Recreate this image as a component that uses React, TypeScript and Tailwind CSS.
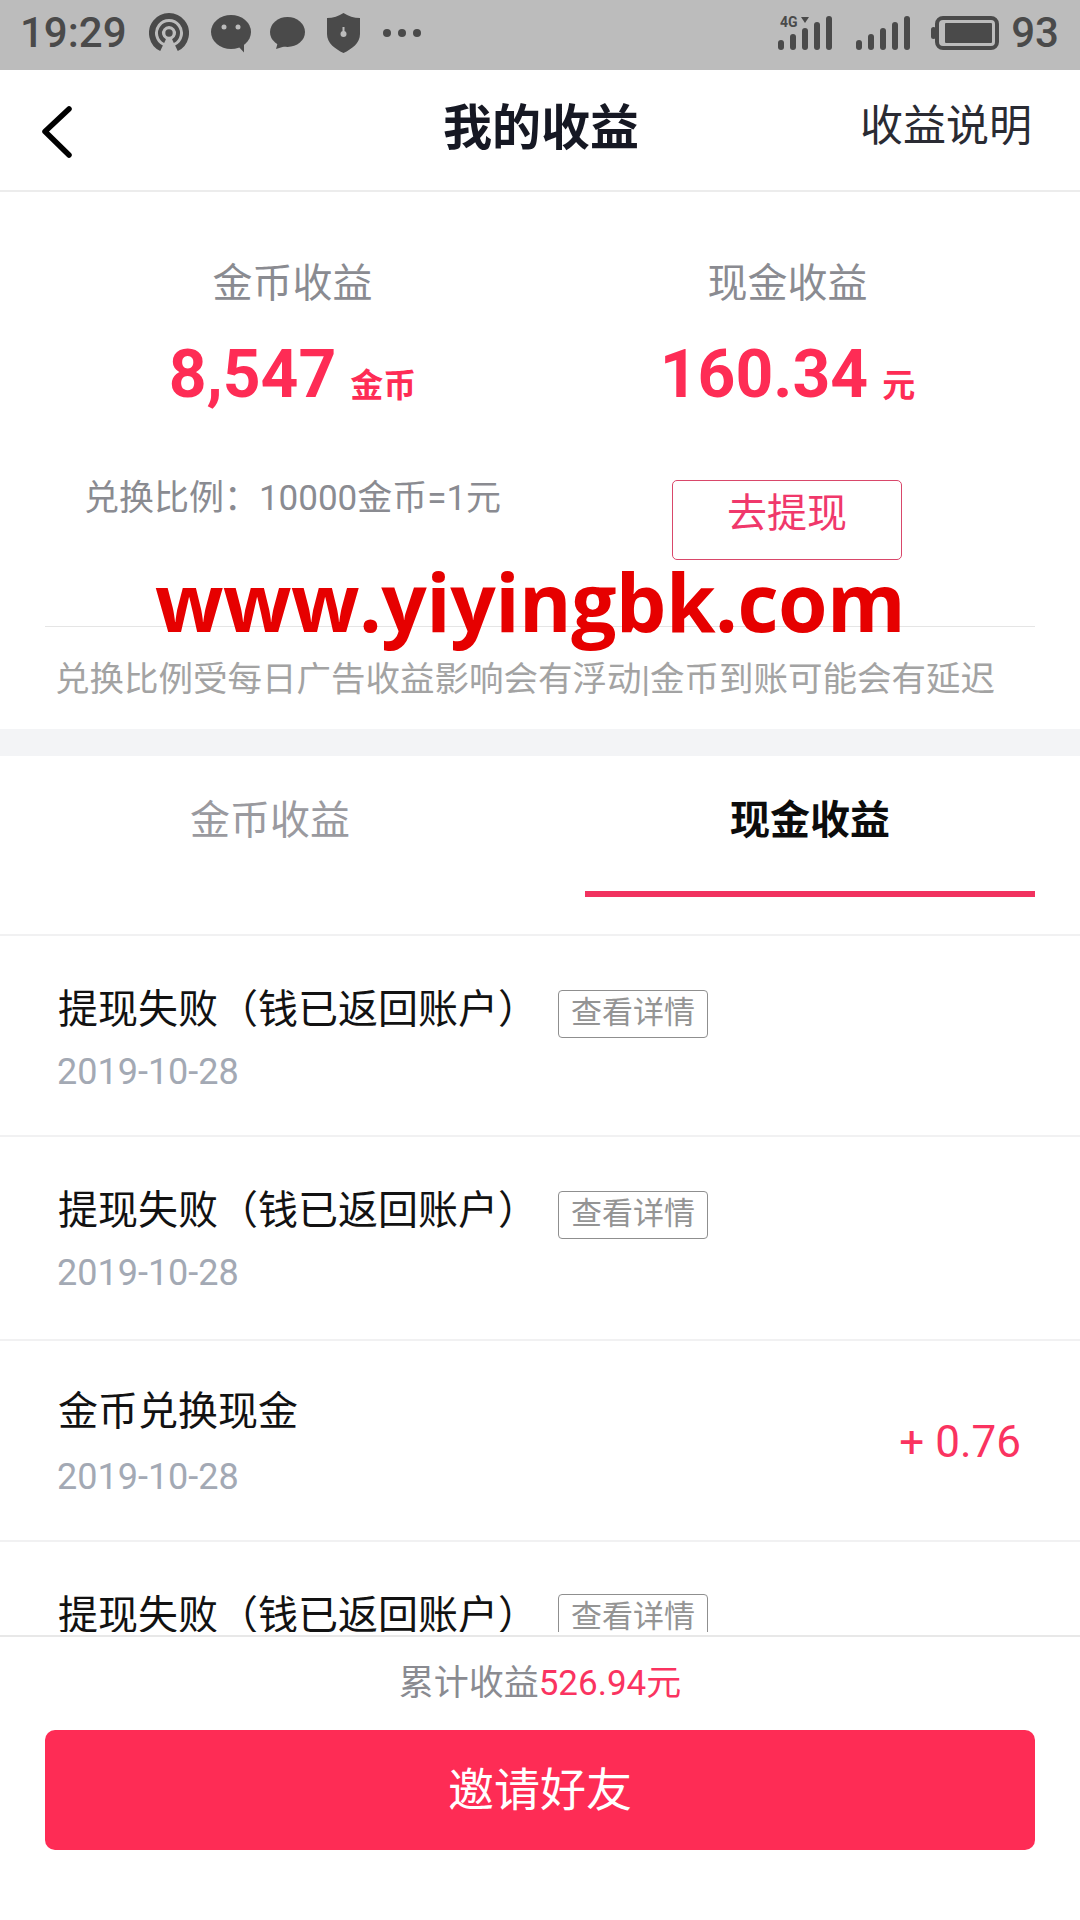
import React from "react";

const font = { fontFamily: 'Roboto, "Noto Sans CJK SC", sans-serif' };

const Signal: React.FC<{ has4g?: boolean }> = ({ has4g }) => (
  <svg width="54" height="36" viewBox="0 0 54 36">
    {[10, 16, 22, 28, 34].map((h, i) => (
      <rect key={h} x={i * 12} y={35 - h} width="6" height={h} rx="3" fill="#4a4a4a" />
    ))}
    {has4g && (
      <>
        <text x="2" y="12" fontSize="14" fontWeight="700" fontFamily="Roboto" fill="#4a4a4a">
          4G
        </text>
        <path d="M23 2h8l-4 6z" fill="#4a4a4a" />
      </>
    )}
  </svg>
);

const Record: React.FC<{ title: string; tall?: boolean; last?: boolean; amount?: string }> = ({ title, tall, last, amount }) => (
  <div className={`${tall ? "h-[204px]" : "h-[201px]"} shrink-0 border-b-2 border-[#f1f1f2] pl-[58px] pr-[59px] flex justify-between`}>
    <div className="flex flex-col">
      <div className={`flex items-center h-[50px] ${amount ? "mt-[46px]" : "mt-[49px]"}`}>
        <span className="text-[40px] leading-[50px] text-[#121212]">{title}</span>
        {!amount && (
          <span className={`ml-[20px] w-[150px] h-[48px] pb-[2px] border border-[#8f8f8f] rounded-[4px] flex items-center justify-center text-[31px] text-[#949494] ${last ? "mt-[4px]" : "mt-[8px]"}`}>
            查看详情
          </span>
        )}
      </div>
      <div className={`-ml-[1px] text-[36px] leading-[40px] text-[#a3a9b4] ${amount ? "mt-[20px]" : "mt-[17px]"}`}>2019-10-28</div>
    </div>
    {amount && <div className="self-center mt-[3px] text-[44px] text-[#fa3360]">{amount}</div>}
  </div>
);

export default function App() {
  return (
    <div className="relative w-[1080px] h-[1920px] overflow-hidden bg-white flex flex-col" style={font}>
      {/* status bar */}
      <div className="h-[70px] shrink-0 bg-[#bcbcbc] flex items-center justify-between pl-[20px] pr-[21px] pb-[4px]">
        <div className="flex items-center">
          <span className="text-[42px] font-medium leading-none text-[#4a4a4a]">19:29</span>
          <svg className="ml-[22px]" width="40" height="40" viewBox="0 0 40 40" fill="none" stroke="#4a4a4a">
            <path d="M12.55 35.3A17 17 0 1 1 27.45 35.3" strokeWidth="6" />
            <path d="M16.05 28.09A9 9 0 1 1 23.95 28.09" strokeWidth="4" />
            <circle cx="20" cy="20" r="3.7" fill="#4a4a4a" stroke="none" />
          </svg>
          <svg className="ml-[22px]" width="40" height="40" viewBox="0 0 40 40">
            <ellipse cx="20" cy="19" rx="20" ry="17" fill="#4a4a4a" />
            <path d="M27 33l6 6.5V28z" fill="#4a4a4a" />
            <circle cx="13" cy="14" r="2.5" fill="#bcbcbc" />
            <circle cx="27" cy="14" r="2.5" fill="#bcbcbc" />
          </svg>
          <svg className="ml-[19px]" width="35" height="36" viewBox="0 0 35 36">
            <ellipse cx="17.5" cy="17" rx="17.5" ry="15" fill="#4a4a4a" />
            <path d="M8 27L6 34l13-4z" fill="#4a4a4a" />
          </svg>
          <svg className="ml-[22px]" width="33" height="40" viewBox="0 0 33 40">
            <path d="M16.5 0C21 3 27 5 33 5v16c0 9-8 15-16.5 19C8 36 0 30 0 21V5c6 0 12-2 16.5-5z" fill="#4a4a4a" />
            <circle cx="16.5" cy="21" r="3" fill="#bcbcbc" />
            <rect x="15.5" y="14" width="2" height="7" fill="#bcbcbc" />
          </svg>
          <svg className="ml-[23px]" width="38" height="8" viewBox="0 0 38 8" fill="#4a4a4a">
            <circle cx="4" cy="4" r="4" />
            <circle cx="19" cy="4" r="4" />
            <circle cx="34" cy="4" r="4" />
          </svg>
        </div>
        <div className="flex items-center">
          <Signal has4g />
          <div className="ml-[24px]">
            <Signal />
          </div>
          <svg className="ml-[21px]" width="68" height="36" viewBox="0 0 68 36">
            <rect x="0" y="12" width="5" height="12" rx="2.5" fill="#4a4a4a" />
            <rect x="6" y="3" width="60" height="30" rx="6" fill="none" stroke="#4a4a4a" strokeWidth="4" />
            <rect x="14" y="8" width="47" height="20" rx="1" fill="#4a4a4a" />
          </svg>
          <span className="ml-[12px] text-[42px] font-medium leading-none text-[#4a4a4a]">93</span>
        </div>
      </div>

      {/* header */}
      <div className="relative h-[122px] shrink-0 border-b-2 border-[#ececec] flex items-center justify-between pl-[40px] pr-[48px]">
        <svg width="34" height="60" viewBox="0 0 34 60" fill="none" stroke="#000" strokeWidth="5.5" strokeLinecap="round" strokeLinejoin="round">
          <path d="M29 9L5 31.5 29 55" />
        </svg>
        <span className="absolute left-[443px] mb-[2px] text-[49px] font-bold text-[#161823]">我的收益</span>
        <span className="mb-[7px] text-[43px] text-[#2a2b33]">收益说明</span>
      </div>

      {/* summary */}
      <div className="h-[537px] shrink-0 flex flex-col px-[45px]">
        <div className="grid grid-cols-2 mt-[66px] text-center">
          <div className="text-[40px] leading-[52px] text-[#8a8b91]">金币收益</div>
          <div className="text-[40px] leading-[52px] text-[#8a8b91]">现金收益</div>
          <div className="mt-[30px] text-[#fe2c55] font-bold leading-[70px]">
            <span className="text-[66px]">8,547</span>
            <span className="ml-[14px] text-[33px]">金币</span>
          </div>
          <div className="mt-[30px] text-[#fe2c55] font-bold leading-[70px]">
            <span className="text-[66px]">160.34</span>
            <span className="ml-[14px] text-[33px]">元</span>
          </div>
        </div>
        <div className="grid grid-cols-2 mt-[53px] h-[80px]">
          <div className="text-center text-[35px] leading-[38px] text-[#8a8b91]">兑换比例：10000金币=1元</div>
          <div className="w-[230px] h-[80px] -ml-[1px] justify-self-center border border-[#d9476a] rounded-[5px] text-center text-[40px] leading-[66px] text-[#f0386b]">
            去提现
          </div>
        </div>
        <div className="mt-[66px] h-px bg-[#e5e5e5]"></div>
        <div className="mt-[30px] ml-[10px] text-[34.5px] leading-[44px] text-[#a3a3a3] whitespace-nowrap">
          兑换比例受每日广告收益影响会有浮动|金币到账可能会有延迟
        </div>
      </div>

      <div className="h-[27px] shrink-0 bg-[#f3f4f6]"></div>

      {/* tabs */}
      <div className="h-[180px] shrink-0 border-b-2 border-[#f1f1f2] flex pl-[45px] pr-[45px]">
        <div className="w-[450px] pt-[40px] text-center text-[40px] leading-[50px] text-[#9a9a9f]">金币收益</div>
        <div className="ml-[90px] w-[450px] h-[141px] border-b-[6px] border-[#f1325f] pt-[40px] text-center text-[40px] leading-[50px] font-bold text-[#0c0c0c]">
          现金收益
        </div>
      </div>

      {/* records */}
      <div className="h-[696px] mb-[3px] shrink-0 overflow-hidden flex flex-col">
        <Record title="提现失败（钱已返回账户）" />
        <Record title="提现失败（钱已返回账户）" tall />
        <Record title="金币兑换现金" amount="+ 0.76" />
        <Record title="提现失败（钱已返回账户）" last />
      </div>

      {/* footer */}
      <div className="flex-1 border-t-2 border-[#e8e8e8] px-[45px] flex flex-col">
        <div className="mt-[24px] text-center text-[35px] leading-[46px] text-[#8a8b91]">
          累计收益<span className="text-[#fa3360]">526.94元</span>
        </div>
        <button className="mt-[23px] h-[120px] rounded-[10px] bg-[#fe2c55] text-white text-[46px]">邀请好友</button>
      </div>

      {/* watermark */}
      <div
        className="absolute left-[155px] top-[546px] text-[80px] leading-[110px] tracking-[-0.5px] font-bold text-[#e60000] whitespace-nowrap"
        style={{ fontFamily: '"Open Sans", sans-serif' }}
      >
        www.yiyingbk.com
      </div>
    </div>
  );
}
